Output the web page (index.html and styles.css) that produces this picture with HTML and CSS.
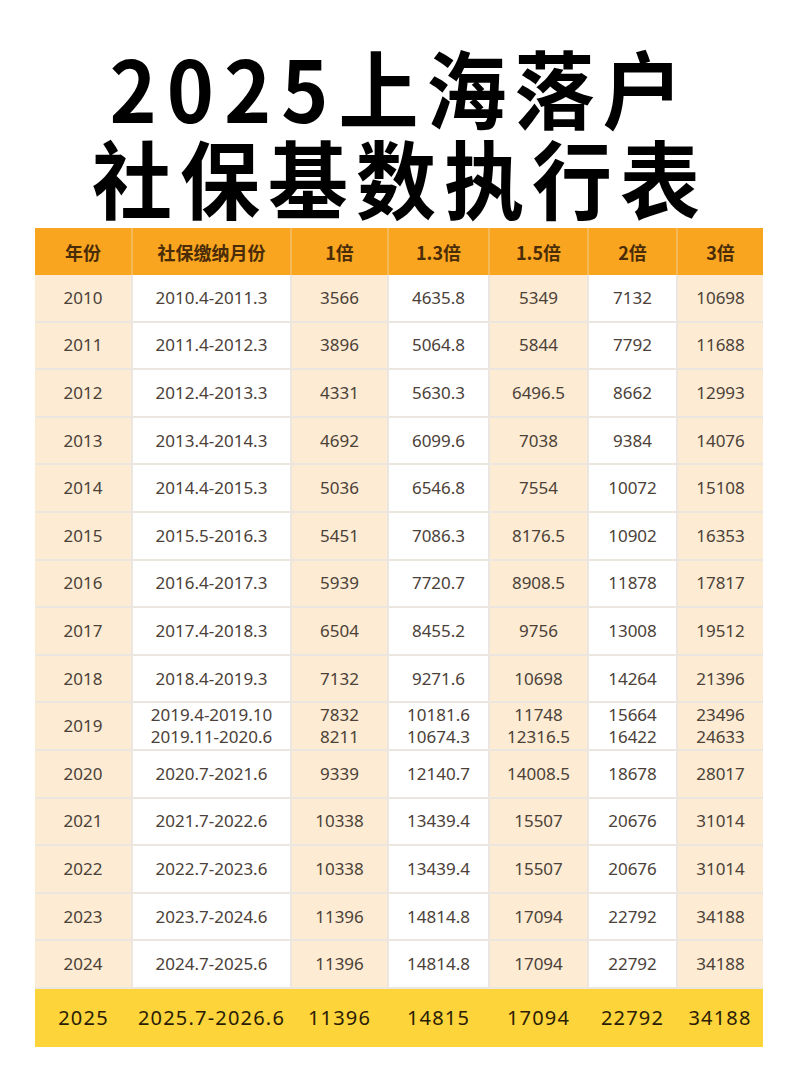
FILE: index.html
```html
<!DOCTYPE html>
<html lang="zh-CN">
<head>
<meta charset="utf-8">
<title>2025上海落户社保基数执行表</title>
<link rel="stylesheet" href="styles.css">
</head>
<body>
<div class="page">
  <h1 class="title">
    <span class="line first"><span class="num">2025</span>上海落户</span>
    <span class="line second">社保基数执行表</span>
  </h1>
  <table class="grid">
    <colgroup>
      <col class="c1"><col class="c2"><col class="c3"><col class="c4"><col class="c5"><col class="c6"><col class="c7">
    </colgroup>
    <thead>
      <tr><th>年份</th><th>社保缴纳月份</th><th>1倍</th><th>1.3倍</th><th>1.5倍</th><th>2倍</th><th>3倍</th></tr>
    </thead>
    <tbody>
      <tr><td>2010</td><td>2010.4-2011.3</td><td>3566</td><td>4635.8</td><td>5349</td><td>7132</td><td>10698</td></tr>
      <tr><td>2011</td><td>2011.4-2012.3</td><td>3896</td><td>5064.8</td><td>5844</td><td>7792</td><td>11688</td></tr>
      <tr><td>2012</td><td>2012.4-2013.3</td><td>4331</td><td>5630.3</td><td>6496.5</td><td>8662</td><td>12993</td></tr>
      <tr><td>2013</td><td>2013.4-2014.3</td><td>4692</td><td>6099.6</td><td>7038</td><td>9384</td><td>14076</td></tr>
      <tr><td>2014</td><td>2014.4-2015.3</td><td>5036</td><td>6546.8</td><td>7554</td><td>10072</td><td>15108</td></tr>
      <tr><td>2015</td><td>2015.5-2016.3</td><td>5451</td><td>7086.3</td><td>8176.5</td><td>10902</td><td>16353</td></tr>
      <tr><td>2016</td><td>2016.4-2017.3</td><td>5939</td><td>7720.7</td><td>8908.5</td><td>11878</td><td>17817</td></tr>
      <tr><td>2017</td><td>2017.4-2018.3</td><td>6504</td><td>8455.2</td><td>9756</td><td>13008</td><td>19512</td></tr>
      <tr><td>2018</td><td>2018.4-2019.3</td><td>7132</td><td>9271.6</td><td>10698</td><td>14264</td><td>21396</td></tr>
      <tr class="two"><td>2019</td><td>2019.4-2019.10<br>2019.11-2020.6</td><td>7832<br>8211</td><td>10181.6<br>10674.3</td><td>11748<br>12316.5</td><td>15664<br>16422</td><td>23496<br>24633</td></tr>
      <tr><td>2020</td><td>2020.7-2021.6</td><td>9339</td><td>12140.7</td><td>14008.5</td><td>18678</td><td>28017</td></tr>
      <tr><td>2021</td><td>2021.7-2022.6</td><td>10338</td><td>13439.4</td><td>15507</td><td>20676</td><td>31014</td></tr>
      <tr><td>2022</td><td>2022.7-2023.6</td><td>10338</td><td>13439.4</td><td>15507</td><td>20676</td><td>31014</td></tr>
      <tr><td>2023</td><td>2023.7-2024.6</td><td>11396</td><td>14814.8</td><td>17094</td><td>22792</td><td>34188</td></tr>
      <tr><td>2024</td><td>2024.7-2025.6</td><td>11396</td><td>14814.8</td><td>17094</td><td>22792</td><td>34188</td></tr>
    </tbody>
    <tfoot>
      <tr><td>2025</td><td>2025.7-2026.6</td><td>11396</td><td>14815</td><td>17094</td><td>22792</td><td>34188</td></tr>
    </tfoot>
  </table>
</div>
</body>
</html>
```

FILE: styles.css
```css
html, body {
  margin: 0;
  padding: 0;
  background: #ffffff;
}

.page {
  width: 800px;
  height: 1069px;
  padding-top: 43px;
  box-sizing: border-box;
  overflow: hidden;
}

.title {
  margin: 0 0 5px 0;
  display: flex;
  flex-direction: column;
  align-items: center;
  font-family: "Noto Sans CJK SC", sans-serif;
  font-weight: 700;
  font-size: 80px;
  color: #000;
  letter-spacing: 8px;
}

.title .line {
  display: block;
  white-space: nowrap;
  transform: scaleY(1.06);
}

.title .first {
  line-height: 86px;
}

.title .second {
  line-height: 94px;
}

.title .num {
  letter-spacing: 10px;
}

.grid {
  margin-left: 35px;
  width: 728px;
  border-collapse: collapse;
  table-layout: fixed;
  font-family: "Noto Sans", "Noto Sans CJK SC", sans-serif;
}

.c1 { width: 97px; }
.c2 { width: 159px; }
.c3 { width: 97px; }
.c4 { width: 101px; }
.c5 { width: 99px; }
.c6 { width: 89px; }
.c7 { width: 86px; }

.grid th {
  background: #f9a51f;
  color: #4a2c08;
  font-family: "Noto Sans CJK SC", sans-serif;
  font-size: 18px;
  font-weight: 700;
  height: 47px;
  padding: 0;
  border-left: 2px solid #f6b95a;
  text-align: center;
}

.grid th:first-child {
  border-left: none;
}

.grid tbody td {
  height: 45.6px;
  padding: 0;
  text-align: center;
  font-size: 17px;
  line-height: 22px;
  color: #4b4138;
  border: 2px solid #ebe6e0;
  background: #ffffff;
}

.grid tbody tr:first-child td {
  border-top: none;
}

.grid tbody td:first-child {
  border-left: none;
}

.grid tbody td:last-child {
  border-right: none;
}

.grid tbody td:nth-child(odd) {
  background: #fdebd3;
}

.grid tfoot td {
  background: #fdd43a;
  height: 58px;
  padding: 0;
  text-align: center;
  font-family: "Noto Sans", "Open Sans", sans-serif;
  font-size: 20px;
  letter-spacing: 1.2px;
  color: #2b1d05;
  border: none;
}
```
